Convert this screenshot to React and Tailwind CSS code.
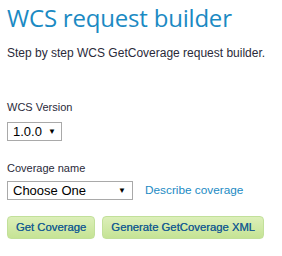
export default function App() {
  return (
    <div className="w-[282px] h-[256px] bg-white px-[7px] pt-[1px] font-['Liberation_Sans',sans-serif] whitespace-nowrap">
      <h1 className="text-[24px] leading-[34px] text-[#1b8ac3] font-['Open_Sans',sans-serif] tracking-[-0.2px]">
        WCS request builder
      </h1>
      <p className="mt-[11px] text-[12px] leading-[14px] text-[#2a2a3a]">
        Step by step WCS GetCoverage request builder.
      </p>

      <div className="mt-[40px] text-[11px] leading-[14px] text-[#2a2a3a]">
        WCS Version
      </div>
      <div className="mt-[8px] flex">
        <div className="flex items-center gap-[6px] h-[19px] border border-[#a9a9a9] pl-[5px] pr-[5px] text-[13px] text-black">
          <span>1.0.0</span>
          <span className="text-[8px]">▼</span>
        </div>
      </div>

      <div className="mt-[20px] text-[11px] leading-[14px] text-[#2a2a3a]">
        Coverage name
      </div>
      <div className="mt-[6px] flex items-center gap-[12px]">
        <div className="flex items-center justify-between w-[126px] h-[19px] border border-[#a9a9a9] pl-[5px] pr-[6px] text-[13px] text-black">
          <span>Choose One</span>
          <span className="text-[8px]">▼</span>
        </div>
        <a className="text-[11.8px] text-[#1b8ac3]">
          Describe coverage
        </a>
      </div>

      <div className="mt-[16px] flex gap-[7px]">
        <button className="h-[23px] px-[8px] rounded-[4px] border border-[#c2e09a] bg-gradient-to-b from-[#dcefb9] to-[#c5e394] text-[11.3px] text-[#1d5f92] [text-shadow:0_0_0.5px_#1d5f92]">
          Get Coverage
        </button>
        <button className="h-[23px] px-[8px] rounded-[4px] border border-[#c2e09a] bg-gradient-to-b from-[#dcefb9] to-[#c5e394] text-[11.3px] text-[#1d5f92] [text-shadow:0_0_0.5px_#1d5f92]">
          Generate GetCoverage XML
        </button>
      </div>
    </div>
  );
}
